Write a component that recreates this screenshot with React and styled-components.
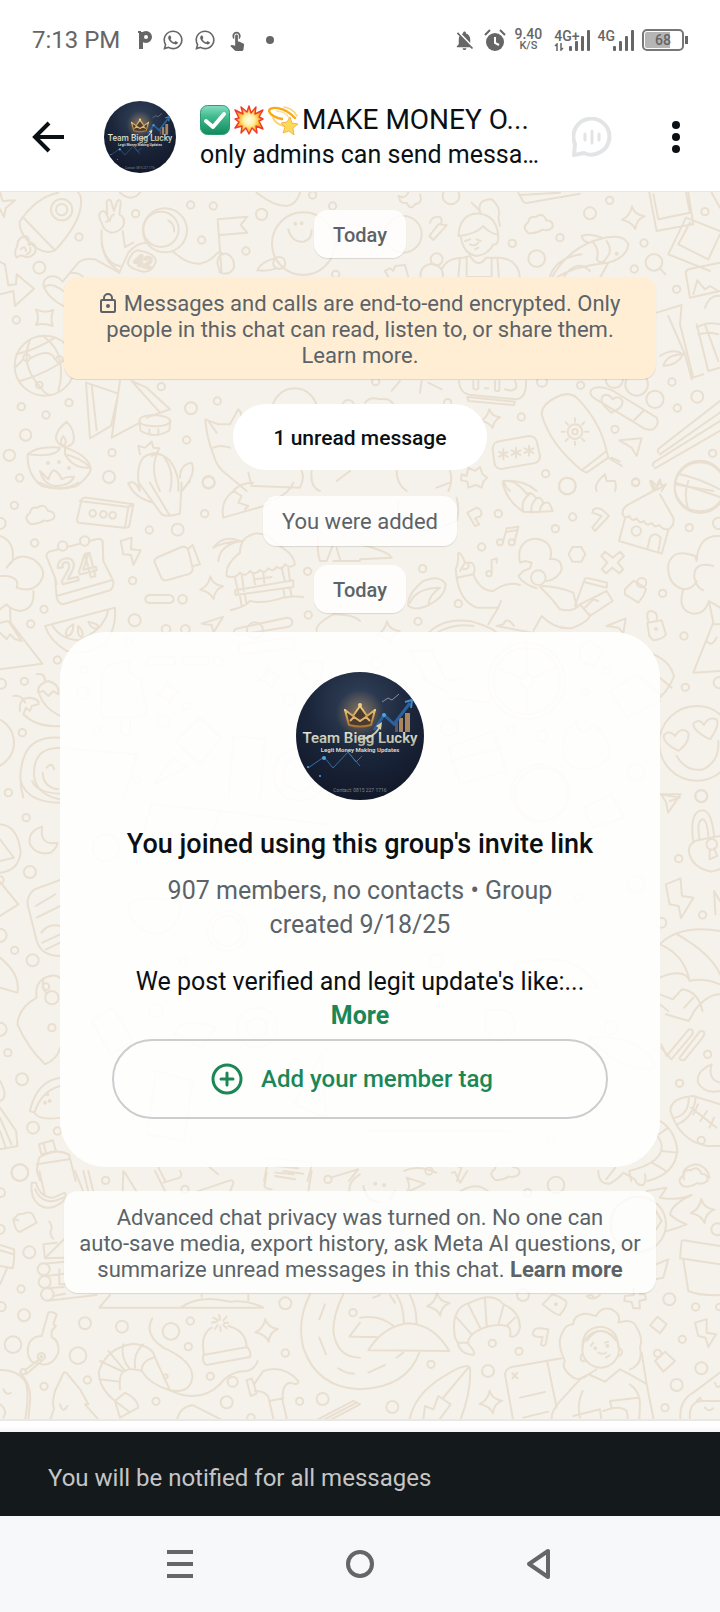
import React from 'react'
import styled, { createGlobalStyle } from 'styled-components'
import { FaWhatsapp } from 'react-icons/fa'
import { MdNotificationsOff, MdTouchApp } from 'react-icons/md'

const GlobalStyle = createGlobalStyle`
  * {
    box-sizing: border-box;
  }
  body {
    margin: 0;
    background: #fff;
    font-family: Roboto, 'Noto Sans', sans-serif;
    color: #0b1014;
  }
  button {
    padding: 0;
    border: 0;
    background: none;
    color: inherit;
    font: inherit;
    cursor: pointer;
  }
  a {
    color: inherit;
    text-decoration: none;
  }
`

// four pointed sparkle centred on x, y
const sparkle = (x, y, s = 34) =>
  `M${x - 4},${y - s} Q${x + 3},${y - 8} ${x + s},${y - 4} Q${x + 9},${y + 5} ${x + 6},${y + s} Q${x - 4},${y + 12} ${x - s},${y + 6} Q${x - 10},${y - 4} ${x - 4},${y - s} Z`

const cloud = (x, y) =>
  `M${x - 30},${y + 28} Q${x - 52},${y + 10} ${x - 30},${y - 4} Q${x - 28},${y - 24} ${x - 8},${y - 20} Q${x + 14},${y - 36} ${x + 24},${y - 10} Q${x + 48},${y - 8} ${x + 42},${y + 12} Q${x + 28},${y + 24} ${x + 12},${y + 18} Q${x - 8},${y + 32} ${x - 30},${y + 28} Z`

// wallpaper tiles, drawn on a grid three times finer than the page
const doodles = [
  {
    at: 'translate(0 -1) scale(0.3333)',
    circles: [[572, 42, 11], [640, 45, 11], [407, 68, 11], [237, 138, 11], [605, 147, 11], [738, 180, 11], [785, 70, 17], [938, 12, 11], [998, 45, 11], [1007, 250, 11], [118, 230, 18], [49, 387, 11], [64, 647, 11], [207, 635, 11], [138, 672, 11], [77, 732, 17], [28, 793, 17], [59, 861, 11], [573, 652, 18], [484, 587, 11], [652, 630, 11], [560, 747, 11], [336, 785, 11], [327, 858, 18], [626, 873, 18], [1045, 645, 18], [185, 56, 32], [185, 56, 17], [495, 118, 66], [483, 115, 53], [910, 158, 94], [838, 216, 18], [886, 98, 3], [905, 97, 3], [134, 524, 90], [80, 500, 10], [178, 505, 10], [118, 582, 10], [884, 660, 68], [144, 816, 3], [177, 813, 3], [207, 831, 3]],
    paths: [
      'M0,55 L12,78 L17,52 L45,28 L8,30 L0,5',
      'M175,5 C120,15 80,60 60,90 Q55,110 75,140 C110,180 140,190 165,178 C210,130 240,80 243,40 Q245,15 235,5 M68,78 L165,178',
      'M78,135 Q50,140 52,165 Q40,185 50,200 Q60,190 70,195 Q90,205 105,185 Q112,165 95,155 Q90,165 85,160 Q92,145 78,135 M62,175 Q75,160 78,180 M80,190 Q95,185 90,170',
      'M305,95 Q290,70 305,62 Q315,55 322,75 L320,35 Q322,22 332,28 L342,60 L352,30 Q362,22 362,38 L358,70 Q378,80 370,105 Q355,125 335,125 Q310,120 305,95 M322,75 Q330,92 318,92 M342,70 Q330,75 330,90',
      'M305,118 Q300,200 345,230 L358,245 L385,185 Q410,155 440,155 M368,120 L375,168 L400,155',
      'M305,160 Q320,220 360,225 M505,88 Q525,100 522,122',
      'M415,178 Q468,188 468,212 Q455,245 430,242 Q385,232 383,215 Q395,180 415,178 Z',
      'M358,245 L285,205 Q250,200 235,215 L188,272 Q170,250 145,258 Q125,270 132,290 Q150,325 190,345 M132,290 Q150,270 190,300 M210,245 Q245,245 250,260',
      'M520,182 Q560,220 600,218 Q630,212 650,188 Q660,180 670,190',
      'M665,245 L653,85 L742,77 L722,102 L742,125 L660,132 M652,215 Q655,185 680,188 Q705,200 702,230 Q690,255 660,245 Z',
      'M828,200 Q780,215 772,238 Q800,242 830,232 M865,115 Q875,155 910,152 Q935,148 935,118',
      'M0,310 L40,300 L45,345 L102,293 L50,250 L48,280 L25,283 L15,220 L0,213',
      'M108,355 Q133,368 160,357 Q150,382 158,405 Q132,395 108,402 Q120,380 108,355 Z',
      'M50,490 Q110,475 165,440 M60,570 Q140,550 220,490 M90,447 Q60,520 118,585 Q135,610 150,612 M130,435 Q175,470 178,505 Q190,550 175,600 M45,530 L70,505 M95,500 Q150,470 165,505',
      'M258,575 L355,608 L333,705 L270,742 Z M275,580 L290,718 M360,570 L335,740 L420,695 M395,570 L440,590 L510,655 L440,680 M395,570 L480,665',
      'M418,690 Q420,672 464,672 Q508,675 511,690 Q508,705 464,706 Q420,705 418,690 L422,720 Q464,745 508,718 L511,690 M448,715 L448,725 M475,715 L475,725',
      'M83,790 Q80,850 125,885 Q180,900 230,885 Q275,850 272,830 Q240,800 195,790 L195,768 M83,790 Q110,765 180,770 Q170,800 83,790 M195,770 Q260,790 272,830 Q220,835 195,790',
      'M200,692 Q165,720 168,745 Q190,785 220,755 Q228,720 200,692 Z M190,735 Q175,755 190,765 Q205,755 190,735',
      'M120,840 Q130,880 165,885 Q210,885 222,858 Q200,855 185,865 Q175,840 160,838 Q148,850 145,865 Z',
      'M420,900 Q405,830 430,800 Q470,770 510,810 Q540,850 535,900 M470,790 Q450,840 480,900 M490,795 Q525,840 510,900 M540,860 Q540,820 575,815 Q590,850 545,900 M420,790 L415,765 L435,770 L455,752 L460,770 L478,772 Q470,790 455,795 M385,880 Q400,860 420,900',
      'M640,790 Q620,740 616,685 L655,700 L690,700 L715,655 Q730,670 722,690 M640,790 Q650,830 680,850 L740,900 M625,690 L650,725 M640,770 Q660,760 690,770 M745,845 L755,885 L900,890 Q915,860 905,840',
      'M770,5 Q820,45 860,45 Q890,40 900,5 M360,5 Q395,35 420,5 M935,840 Q930,890 960,900 M1010,870 L1050,840'
    ]
  },
  {
    at: 'translate(360 -1) scale(0.3333)',
    circles: [[273, 15, 25], [690, 67, 18], [749, 28, 11], [600, 140, 11], [457, 157, 11], [530, 203, 25], [823, 234, 11], [852, 156, 11], [1035, 62, 11], [950, 295, 11], [936, 573, 11], [1012, 617, 18], [952, 651, 11], [765, 715, 11], [662, 583, 11], [484, 678, 11], [557, 848, 11], [622, 885, 25], [827, 873, 11], [1058, 787, 11], [546, 572, 15], [263, 635, 11], [47, 572, 11], [882, 214, 25], [215, 253, 34], [230, 205, 18], [830, 580, 34], [885, 625, 26], [763, 565, 26], [645, 722, 22], [645, 722, 8], [1020, 890, 76], [770, 188, 3], [130, 130, 55]],
    paths: [
      'M115,15 Q135,25 145,5 M180,10 Q190,35 165,40 Q150,60 140,35 Q118,40 118,18',
      'M475,5 L490,32 Q495,38 505,35 L660,8 M480,12 L600,5',
      'M295,135 Q300,65 360,68 Q410,75 415,135 Q415,165 400,160 Q385,190 350,195 Q310,190 302,135 Z M295,135 Q350,130 370,105 Q385,125 415,132 M360,65 Q350,25 395,25 Q425,50 415,80 L420,105 M335,35 L362,62 M315,150 L330,145 M350,145 L362,150 M330,160 Q345,168 355,155 M345,175 L355,170',
      'M245,235 Q260,200 310,200 L330,195 Q355,235 378,200 L420,200 Q475,205 480,260 M300,200 L295,260 M320,202 L320,258 L395,258 L395,200 M412,200 L417,260',
      'M210,95 Q215,75 240,78 Q250,90 240,100 L260,103 L220,147 L208,135 L235,100',
      cloud(535, 98),
      sparkle(820, 80),
      sparkle(392, 683, 28),
      'M575,260 Q620,180 700,150 Q790,120 805,160 Q800,200 745,215 Q640,225 590,260 M570,255 Q590,200 665,190 M665,135 Q690,125 725,140 M665,135 Q670,155 690,155 M700,155 Q720,180 710,205 Q725,225 740,200 Q760,180 740,150 M610,260 Q650,200 690,240 M745,215 L720,260',
      'M868,5 L890,120 L1000,100 L985,5 M880,10 L895,85 L990,65 L978,5 M978,80 L1080,120 M978,80 L925,190 L1050,240 M990,95 L955,160 L1045,205 L1080,130 M900,232 L916,250 M1055,5 L1080,50',
      'M1080,215 L985,235 Q975,240 978,250 L990,320 L1080,300 M1000,310 L1012,268 L1035,295 L1050,285 L1075,300 M1035,350 Q1050,310 1080,315',
      'M75,240 L90,232 L100,240 L105,225 L135,222 L145,258 M75,240 L85,258',
      'M890,365 L965,342 L960,400 L985,500 L1000,560 L1030,550 M925,375 L975,490 L995,565 M970,490 Q920,490 910,525 Q950,525 970,490 Q940,470 900,495 M1010,410 Q1040,390 1080,400 M1010,400 L1045,540 L1080,530 M1035,400 L1075,510 M1015,430 Q1050,420 1075,430',
      'M297,570 Q300,610 335,612 L470,625 Q500,620 498,570 M322,618 L465,632 L462,642 L325,630 Z',
      'M340,570 L340,592 Q348,600 355,592 L355,570 M375,592 L385,592 M405,570 L405,598 Q412,602 418,598 L418,570 M435,595 Q465,605 470,585 L465,570',
      'M95,600 L120,570 M180,605 L185,570 M205,575 L245,595 M15,635 Q30,615 60,625 Q90,620 100,640',
      'M700,620 Q680,600 705,590 Q730,585 760,600 L890,680 Q900,700 880,715 Q860,720 840,705 L700,620 M755,665 Q715,635 728,615 Q745,605 758,625 Q775,610 788,630 Q790,650 755,665 M820,690 L850,660',
      'M545,670 Q545,640 590,618 Q625,600 650,620 Q720,690 740,780 L665,838 Q570,760 545,670 M740,780 L745,800 L680,845 L665,838 M745,800 L785,825 M755,800 L780,812 M645,682 L645,692 M645,752 L645,762 M605,722 L615,722 M675,722 L685,722 M617,694 L624,701 M673,694 L666,701 M617,750 L624,743 M673,750 L666,743',
      'M412,752 L505,735 Q525,735 530,750 L540,795 Q540,812 525,816 L425,834 Q408,834 404,820 L398,775 Q398,758 412,752 Z M430,775 L430,805 M417,783 L443,797 M443,783 L417,797 M468,770 L468,800 M455,778 L481,792 M481,778 L455,792 M507,764 L507,794 M494,772 L520,786 M520,772 L494,786',
      'M778,748 L845,742 L830,795 L815,770 Z',
      'M895,785 Q890,775 900,770 L1080,630 M900,790 L1080,665 M880,825 Q875,820 885,812 L1080,690 M885,832 L1080,720',
      'M960,850 Q1010,860 1080,895 M945,880 Q1000,890 1060,900',
      'M305,850 L320,855 L325,830 L345,840 L360,828 L368,850 L382,860 L370,872 L365,890 L348,882 L325,890 L322,872 L303,868 Z',
      'M110,840 Q110,880 140,900 M270,840 Q280,870 265,900 M430,870 Q440,895 450,900 M430,870 Q490,865 530,900 M735,850 Q700,880 710,900 M735,850 L740,870 L765,870 Q770,885 765,900 M880,895 L875,870 L890,885 L900,865 L905,885 L918,880 L905,900'
    ]
  },
  {
    at: 'translate(0 289) scale(0.3333)',
    circles: [[43, 73, 11], [104, 186, 11], [448, 147, 11], [533, 146, 18], [614, 98, 11], [626, 5, 18], [398, 299, 11], [132, 385, 11], [92, 429, 11], [404, 418, 18], [498, 445, 13], [556, 445, 13], [172, 537, 11], [73, 601, 11], [67, 755, 11], [25, 935, 11], [923, 271, 11], [925, 402, 11], [3, 608, 15], [0, 127, 17], [248, 635, 18], [490, 720, 18], [868, 655, 18], [560, 675, 11], [278, 97, 10], [310, 100, 10], [338, 103, 10], [548, 355, 13], [765, 448, 24], [-35, 785, 77], [188, 195, 14], [254, 180, 14], [385, 480, 11], [250, 567, 11], [410, 895, 11], [290, 745, 11], [655, 540, 14], [900, 880, 80], [900, 880, 50]],
    paths: [
      cloud(120, 100),
      'M245,55 Q250,48 262,50 L400,70 L388,135 Q385,142 372,140 L235,125 Q230,120 232,112 Z M240,60 L385,78 L375,140 M385,78 L400,70',
      'M385,5 Q400,50 460,65 M420,10 L485,100 Q500,110 540,98 L545,5 M450,5 L510,105 M120,5 Q180,40 235,5 M545,30 L570,0',
      'M175,205 L145,213 Q138,218 140,228 L165,290 L170,350 Q175,368 190,370 L330,328 Q342,320 340,300 L310,240 L308,182 Q305,172 295,173 L268,180 M202,198 L240,188 M170,345 L335,298 M165,290 L170,310',
      'M362,180 L395,170 L393,205 L422,208 L400,252 L393,222 L370,220 Z',
      'M475,228 L545,198 Q560,195 565,208 L578,262 Q578,275 565,280 L500,298 Q488,300 484,290 L463,242 Q464,232 475,228 Z M563,205 L578,192 L600,250 L580,255',
      sparkle(635, 320),
      'M448,342 L508,342 Q521,345 521,354 Q521,365 508,366 L448,366 Q436,365 436,354 Q436,344 448,342 Z',
      'M135,435 L345,380 Q350,450 310,490 Q260,525 200,510 Q150,480 135,435 M155,430 Q180,475 235,478 Q310,450 325,388 M220,430 Q190,445 200,465 Q220,465 220,430 M235,435 Q230,465 245,468 Q255,455 235,435 M265,422 Q270,440 290,444 Q305,430 265,422',
      'M0,165 Q45,180 38,240 L20,260 Q50,210 100,235 Q150,270 115,310 Q90,335 50,320 Q60,290 20,285 L0,285 M100,330 Q105,385 60,390 Q30,385 20,370 L0,385',
      'M30,380 L32,425 L127,548 L0,565 M0,425 L25,420 L65,480 L45,475 L30,460 L20,475 L0,455',
      'M110,580 Q135,575 135,600 M115,635 Q110,610 145,600 Q180,610 175,640 L160,630 L145,645 L130,630 Z M118,640 Q130,680 180,705 M40,645 Q65,640 75,665 M60,690 Q55,650 90,650 Q120,655 115,670 L95,675 L90,690 L78,680 L70,700 Q110,740 180,735',
      'M180,770 Q100,765 75,820 Q50,880 70,950 M180,800 Q100,800 102,880 Q105,940 180,955 M128,875 Q130,920 175,925 M140,860 Q155,840 162,865',
      'M680,285 Q675,250 720,215 Q720,165 770,157 Q815,160 830,190 Q880,215 885,250 Q870,265 855,250 Q845,270 830,257 Q820,275 805,262 Q795,280 780,267 Q765,285 750,270 Q735,290 720,275 Q705,295 680,285 Z',
      'M705,290 L715,335 M725,280 L732,330 M845,260 L855,302 M865,262 L870,300 M705,328 L880,298 L880,318 L707,342 Z M720,345 L725,375 M735,342 L740,370 M850,325 L855,350 M870,320 L875,345 M760,280 L765,310 M790,275 L793,305 M765,295 L815,288 M692,387 Q730,380 750,360 Q790,370 850,350 Q880,345 910,348 M640,200 Q670,160 720,180 Q665,185 640,200 M655,240 Q660,190 725,180',
      'M605,428 L670,407 L640,455 L635,432 Z',
      'M715,442 L860,410 Q878,410 877,425 Q876,435 862,438 L715,462 Q700,460 702,450 Q705,443 715,442 Z M950,450 Q945,430 1000,400 Q1060,400 1080,420',
      'M670,110 Q660,60 700,30 Q720,5 760,5 M670,110 L810,70 M700,30 L725,45 L715,65 L745,75 L735,85 M880,5 Q860,50 800,60',
      'M955,170 Q950,210 960,240 L980,240 L1000,190 M1000,240 L1080,240 M1010,200 L1020,235',
      'M305,600 Q305,545 360,545 L390,540 Q375,580 420,590 L440,690 Q430,710 410,710 L315,710 Q300,705 302,690 Z M362,715 L362,755 Q376,770 390,755 L390,715',
      'M448,528 L520,528 Q535,540 520,553 L448,553 Q438,540 448,528 Z M555,528 L620,528 Q635,540 620,553 L555,553 Q540,540 555,528 Z',
      sparkle(505, 635),
      sparkle(810, 590),
      'M720,490 L870,470 Q890,480 880,500 L725,520 Q710,505 720,490 Z M895,560 Q900,530 970,545 L960,600 Q920,610 895,560 M700,765 L795,775 L780,960 M700,765 L685,960 M525,780 L600,710 L665,770 L600,850 Z M460,910 L520,830 L560,860 Z M180,800 L410,820 L370,960'
    ]
  },
  {
    at: 'translate(360 289) scale(0.3333)',
    circles: [[415, 98, 11], [638, 108, 11], [586, 143, 11], [365, 198, 11], [188, 263, 11], [295, 368, 11], [174, 421, 11], [908, 337, 11], [972, 465, 11], [976, 619, 11], [1024, 946, 18], [1078, 605, 17], [988, 140, 11], [1076, 127, 17], [827, 5, 11], [622, 15, 25], [420, 184, 9], [455, 184, 9], [387, 278, 8], [535, 290, 22], [829, 150, 14], [1020, 15, 76], [1010, 787, 112], [845, 305, 14], [888, 444, 3], [500, 600, 115], [500, 600, 100], [500, 600, 20], [267, 740, 25], [545, 765, 18], [827, 875, 25], [675, 632, 11], [455, 745, 11], [540, 935, 85], [50, 545, 18], [740, 570, 11]],
    paths: [
      'M428,5 Q440,60 490,92 Q520,95 578,90 L570,70 Q565,60 550,68 Q545,45 528,52 Q515,30 500,38 Q470,0 445,0 M490,92 Q480,60 510,38 M515,95 Q510,70 530,52 M540,92 Q540,75 550,68',
      'M429,184 L440,142 L475,137 L464,182 M440,152 L473,147 M395,275 L395,237 L410,232 L410,245',
      'M637,198 L664,198 L676,220 L664,242 L637,242 L626,220 Z',
      'M735,212 L758,230 L780,212 L792,225 L773,245 L790,265 L778,277 L757,260 L738,277 L725,265 L742,245 L724,225 Z',
      'M788,100 Q785,80 810,68 L880,30 L870,0 M880,30 L915,15 M900,40 L940,110 Q945,135 925,145 Q910,148 898,132 Q885,142 875,126 Q860,138 852,120 Q838,130 830,112 Q815,125 808,105 Q795,115 788,100 M795,112 L777,180 L905,218 L925,148 M862,205 L870,170 Q885,150 902,170 L895,214 M875,5 L885,25 L900,5',
      'M945,5 Q1000,20 1080,48 M985,0 Q970,40 985,85',
      'M290,290 L340,280 Q350,260 335,245 L315,245 Q305,215 295,215 Q295,250 287,265 Z M315,245 L300,270 M325,250 Q330,265 310,265',
      'M290,290 Q300,360 350,380 L415,380 L423,360 M415,380 L385,430 M340,280 Q360,330 400,330 Q440,300 480,312 M480,245 Q470,200 500,180 Q530,165 560,185 Q580,205 570,235 Q605,230 605,265 Q595,295 560,300 M480,245 L495,240 L515,245 L510,262 L490,270 L475,285 Q490,310 530,322',
      'M540,318 Q570,345 600,385 Q640,395 660,370 M545,315 Q590,315 640,335 L650,375 M520,450 L545,405 Q590,450 640,440 Q690,420 690,400',
      'M660,370 L740,330 L758,360 L690,405 Z M675,380 L700,355 L715,360 M645,375 L672,300 Q675,288 685,292 L742,305 L740,320 L672,303',
      'M795,325 L820,300 Q830,300 858,325 L850,345 L835,365 L795,340 Z M862,425 L905,418 L918,460 Q910,475 880,478 L868,465 Z M865,420 Q855,390 875,390 Q895,395 890,415',
      'M1080,165 Q1015,160 1010,240 L1005,225 Q940,200 925,250 Q920,310 970,325 Q1000,325 1010,300 M1060,255 Q1000,240 1003,290 Q1010,320 1030,328 M970,325 Q950,390 1000,398 Q1035,400 1047,360 L1060,425 L1000,575 L1080,570 M1047,360 L1080,380 M1060,430 L1080,430 M1040,480 Q1055,500 1070,470',
      'M145,375 Q140,340 190,300 Q240,280 257,310 Q255,350 200,375 Q165,390 145,375 M150,365 Q170,320 240,320 Q210,340 205,370',
      sparkle(85, 455),
      'M322,95 L350,80 Q370,85 362,105 L345,112 L358,130 L345,135 Z M697,95 Q700,75 725,85 L747,105 L705,150 L697,140 L725,105 Z',
      'M205,456 Q250,410 330,420 Q400,440 410,456 M230,456 Q280,425 340,435 M410,435 L520,456 M410,435 L430,430 Q440,405 462,435',
      'M740,435 L797,412 L790,456 L775,440 Z',
      'M955,810 Q905,785 912,762 Q930,745 945,765 Q965,735 985,755 Q990,785 955,810 Z M1050,775 Q1000,750 1000,728 Q1018,710 1032,732 Q1045,705 1070,715 Q1080,735 1050,775 Z M950,825 Q980,875 1030,865 Q1080,840 1075,780',
      'M880,520 Q930,540 942,585 Q930,620 900,650 M900,590 L935,620 M900,940 L960,950 L930,960',
      'M290,50 Q300,90 290,120 Q200,160 160,145 Q110,140 115,60 M0,235 L95,230 L85,220 Q60,205 0,190 M270,5 L230,20',
      'M500,485 L500,580 M500,620 L500,700 M410,560 L480,590 M590,560 L520,590 M265,800 L400,750 L440,870 L300,910 Z M270,840 L425,800 M150,510 L215,510 L260,600 L310,590 M150,510 L200,600 L270,640 M270,650 L390,665 M750,630 L830,580 L900,640 M750,630 L800,710 L900,660 M610,830 Q600,760 650,720 Q660,780 700,730 Q760,780 745,830 Q700,880 640,860 Z M660,500 L690,480 L730,510 L700,555 L660,540 Z'
    ]
  },
  {
    at: 'translate(0 589) scale(0.4592 0.3333)',
    squash: 0.726,
    circles: [[57, 110, 11], [65, 273, 18], [0, 297, 11], [0, 463, 20], [32, 508, 11], [71, 538, 18], [113, 740, 11], [0, 745, 20], [17, 815, 11], [48, 895, 18], [72, 1040, 18], [125, 1050, 11], [43, 1175, 25], [1527, 45, 18], [1478, 233, 11], [1440, 425, 15], [1530, 402, 11], [1541, 820, 11], [1480, 907, 11], [1527, 1078, 11], [113, 650, 20], [100, 617, 10], [1550, 190, 16], [103, 940, 3], [108, 960, 3], [98, 965, 3], [495, 450, 60], [495, 450, 45], [560, 740, 60], [560, 740, 30], [230, 200, 40], [340, 690, 20], [1180, 40, 80], [1330, 740, 20], [950, 540, 20], [740, 430, 15], [400, 540, 11], [1200, 1080, 11], [1260, 350, 11], [1385, 310, 25]],
    paths: [
      'M45,0 Q60,65 131,65 M70,0 Q80,35 131,38',
      'M0,130 Q40,135 45,215 Q40,270 0,275 M0,175 L30,230 L0,240',
      'M92,137 Q60,150 65,190 Q80,225 110,215 Q125,200 125,185 Q85,195 92,137',
      'M0,303 L40,370 L0,405',
      'M131,297 L75,325 Q58,345 60,370 L80,480 Q90,525 131,525 M78,375 L120,340 M80,410 L131,375 M90,455 Q105,425 131,435 M92,485 L131,460 M100,505 L131,485',
      'M0,530 Q45,580 38,635 L0,620',
      'M131,592 Q120,575 95,592 Q75,610 80,650 Q40,680 38,730 Q60,800 98,850 Q125,835 131,800 M95,592 Q90,620 100,635',
      'M65,990 Q80,900 131,890 M75,995 Q85,1020 131,1010 M65,990 L75,995 Q90,930 131,915',
      'M0,900 Q20,950 0,960 M0,980 L35,1050 L38,1095 L0,1105 M0,1010 L25,1090 M0,1050 L12,1098',
      'M85,1090 L115,1078 L122,1110 L90,1120 Z M95,1088 L100,1115 M80,1170 L85,1130 Q120,1100 150,1120 L165,1200 M80,1150 L150,1135 M80,1170 L88,1200',
      'M1440,40 L1482,40 L1455,95 L1450,62 Z',
      'M1500,210 Q1500,180 1530,175 L1568,165 M1500,210 Q1505,260 1550,272 L1568,265 M1510,185 Q1500,90 1530,88 Q1550,90 1555,165 M1524,178 Q1515,115 1532,115 Q1540,120 1543,170 M1546,205 L1545,235 L1562,225 L1555,202',
      'M1450,310 L1482,292 L1485,345 L1510,350 L1483,412 L1478,375 L1458,370 Z M1555,330 L1568,360 M1555,330 L1558,400',
      'M1437,490 Q1480,430 1568,450 M1437,490 Q1490,520 1502,600 M1437,590 Q1490,560 1502,600 Q1530,590 1568,610 M1475,460 Q1550,520 1568,580',
      'M1437,640 L1465,655 L1485,625 Q1520,630 1530,690 M1490,680 L1510,650 M1450,700 L1500,720 L1512,690 Q1540,640 1568,640 M1437,670 L1455,690',
      'M1440,790 L1452,825 L1500,745 Q1515,745 1505,765 L1462,835 L1440,800 M1480,830 L1525,750 Q1540,750 1530,770 L1490,838 Q1478,838 1480,830',
      'M1550,850 Q1515,870 1520,905 Q1535,940 1568,930 M1550,850 Q1540,895 1568,905',
      'M1460,990 Q1460,950 1510,945 L1568,970 M1460,990 Q1480,1080 1540,1095 L1568,1095 M1470,1010 Q1500,1000 1500,950 M1475,1030 Q1510,1010 1515,950 M1505,980 L1560,1040 M1510,1000 L1520,970 M1525,1020 L1540,990 M1545,1040 L1555,1010',
      'M1430,1015 Q1470,1040 1475,1110 Q1470,1180 1410,1200 M1425,1055 Q1445,1080 1440,1110 Q1430,1150 1370,1170 M1435,1060 L1455,1040 M1440,1110 L1475,1115 M1420,1145 L1450,1170 M1340,1160 L1320,1195 M1370,1170 L1375,1200',
      'M1490,1195 Q1480,1160 1515,1150 Q1540,1155 1545,1190',
      'M330,70 L480,90 L440,240 L300,210 Z M480,90 L710,130 M200,720 L245,680 L290,780 L240,820 Z M380,760 Q390,700 470,740 L440,800 Z M700,820 L710,1010 L640,970 Z M800,1050 L1110,1050 M1280,770 Q1400,760 1430,860 Q1360,880 1280,770 M280,370 Q300,340 390,360 Q400,440 340,460 Q280,440 280,370 M1060,690 Q1130,670 1120,750 Q1080,820 1055,740 Z M1120,550 Q1260,500 1300,620 L1130,600 Z M340,870 L420,900 L400,1080 L320,1060 Z M1270,80 L1330,40 L1360,110 L1290,140 Z',
      'M575,1200 L585,1130 L680,1145 L670,1200 M600,1155 L650,1162 M600,1175 L640,1180 M345,1160 L360,1200 M440,1140 L475,1180 M720,1190 L780,1165 L760,1200 M880,1170 Q910,1150 950,1175 M985,1150 L1005,1160 L995,1200'
    ]
  },
  {
    at: 'translate(0 979) scale(0.3333)',
    circles: [[60, 5, 25], [317, 28, 11], [555, 55, 11], [88, 244, 18], [63, 354, 11], [984, 25, 11], [0, 175, 14], [3, 407, 14], [72, 433, 18], [39, 521, 25], [255, 457, 18], [366, 467, 18], [513, 481, 25], [571, 450, 11], [234, 554, 25], [565, 527, 11], [856, 397, 18], [856, 546, 11], [631, 616, 11], [262, 627, 11], [132, 646, 11], [468, 691, 11], [680, 694, 18], [899, 691, 11], [968, 684, 18], [753, 740, 11], [1059, 425, 11], [2, 65, 13], [131, 295, 18], [134, 333, 18], [142, 370, 19], [124, 557, 11], [124, 557, 3], [70, 602, 8], [698, 632, 15], [497, 616, 6]],
    paths: [
      'M95,35 L108,35 Q120,80 160,80 L195,65 Q200,75 190,90 Q150,125 115,100 Q90,80 95,35 M105,55 Q130,110 190,80',
      'M118,0 L135,75 M225,0 L250,62 M250,0 L265,62 M265,0 L280,62',
      'M370,0 L368,60 M375,5 L410,62 M465,0 L495,60 M490,35 L540,20 Q548,10 540,0 M590,62 L690,28 Q702,28 700,38 L690,62',
      'M800,5 L793,45 Q800,55 815,55 M825,15 L885,25 M850,0 L910,8 M935,0 L925,62 M1080,10 Q1045,30 1048,62',
      'M40,145 L55,130 L70,128 Q90,120 98,130 L110,155 L60,183 Q45,180 40,145 M40,145 L55,148',
      'M148,152 Q160,170 152,180 Q150,195 160,203',
      'M130,220 L170,215 M130,220 L135,262 L192,205 M135,262 L192,260 M135,278 L192,272 M140,315 L192,308 M140,352 L192,348 M142,389 L290,372 M160,375 L195,368 M178,295 L178,340 L195,340',
      'M0,222 L42,235 Q45,260 38,292 L0,285 M22,290 L0,340 M0,238 L40,250',
      'M330,372 L298,410 L790,410 Q740,385 690,392 Q600,370 545,408 M605,372 L605,378 M745,372 L745,388',
      'M145,425 Q155,420 170,430 L160,460 L168,465 L155,480 L155,498 Q180,510 175,545 Q160,585 125,580 L95,572 Q75,550 88,515 Q100,495 125,495 Z M118,565 L75,598 M125,570 L80,608',
      'M0,597 Q50,595 75,630 Q90,660 75,750 M60,605 Q95,640 90,690 L85,750 M10,655 Q20,675 32,665 M0,700 Q25,720 10,740',
      'M150,750 L162,712 Q155,700 165,660 L190,607 Q196,600 203,610 L240,655 L265,700 L255,700 L295,745 M180,700 Q188,730 202,705',
      'M345,690 Q295,650 297,600 Q320,530 400,518 Q460,525 465,560 L510,658 Q450,640 425,600 M345,690 L360,740 L415,710 Q415,685 375,665 Z M345,690 L385,720 M360,655 Q355,600 380,598 Q385,590 425,600 M300,570 L365,600 M298,625 L360,632 M325,540 L375,600 M370,520 Q360,560 390,595 M430,520 Q400,545 405,590 M460,560 Q425,570 425,600',
      'M457,442 Q430,490 490,530 Q580,570 577,620 Q570,670 510,658 Q600,700 660,640 Q690,600 740,600 Q765,595 773,570',
      'M612,550 Q600,490 635,470 M685,465 Q740,480 740,530 M610,552 L742,528 Q755,545 750,558 L620,582 Q605,575 610,552 M635,455 L650,452 M640,440 L655,448 M658,432 L660,446 M680,437 L670,448 M685,455 L672,456 M680,472 L670,462 M662,480 L661,466 M645,474 L653,462',
      sparkle(800, 478),
      'M740,628 L755,622 L762,640 L790,600 Q850,580 895,630 Q895,645 870,635 Q845,640 848,690 L862,750 M808,690 L822,750 M808,690 L850,682 M808,690 Q805,660 765,660 M740,628 L752,675 L770,668 L762,640',
      'M530,750 Q540,705 580,703 L668,748',
      'M930,370 Q890,450 910,530 Q950,650 1080,655 M1030,370 Q1000,430 1000,480 Q1010,560 1080,560 M975,400 L958,445 M958,500 L978,550 M1015,592 Q1040,608 1062,608 M1080,455 L1048,497 L1080,497',
      'M945,750 L1060,690 L1080,700 M985,750 L1080,700 M965,750 L1070,695'
    ]
  },
  {
    at: 'translate(360 979) scale(0.3333)',
    circles: [[588, 42, 25], [503, 65, 11], [1072, 175, 18], [489, 372, 18], [928, 385, 18], [1007, 408, 11], [397, 517, 11], [477, 541, 11], [213, 580, 11], [384, 600, 18], [97, 708, 18], [967, 505, 11], [1024, 592, 18], [950, 642, 18], [915, 710, 11], [1078, 408, 10], [893, 547, 11], [722, 535, 55], [835, 160, 83], [588, 400, 3], [207, 0, 11], [46, 38, 3], [72, 42, 3], [706, 532, 3], [742, 524, 3]],
    paths: [
      'M275,5 L285,3 L300,35 L322,0 M10,45 Q20,95 60,92 M90,85 L105,60 M140,20 L195,38 L150,60 M140,20 Q155,50 140,62',
      cloud(1000, 18),
      cloud(435, -2),
      'M715,0 Q715,40 750,38 Q780,20 790,5 L825,25 Q830,45 850,42 Q860,30 855,10 M300,62 Q350,30 385,62',
      sparkle(1028, 120, 36),
      sparkle(235, 400),
      sparkle(393, 693),
      'M860,60 L920,50 L900,80 Q950,90 995,72 Q935,100 930,130 Q950,150 980,160 Q930,180 915,180 M888,120 L905,150 L888,175 M888,280 L925,265 L910,320 L888,325',
      'M965,210 Q970,205 985,210 L1080,225 M965,210 L960,262 L1080,280 M970,265 L985,360 Q1020,375 1080,372',
      'M25,538 L268,540 Q220,460 145,457 Q70,465 25,538 M0,498 L50,498 M0,440 Q60,430 100,465 M0,655 Q140,650 178,545 M132,457 Q130,400 110,372 M170,460 Q170,410 150,372 M25,605 L75,582 M110,560 L130,545 M40,380 L60,372 M90,372 L105,395',
      'M285,500 Q270,410 330,395 Q400,360 430,400 Q480,420 480,470 Q470,505 450,495 Q455,470 440,465 Q400,455 350,480 Q320,500 325,520 Q350,545 340,552 Q300,550 293,515 Z M290,440 L335,490 M325,400 L360,470 M375,385 L380,465 M432,400 L415,460 M465,440 L440,465 M295,515 L325,515',
      'M548,400 L575,372 Q585,368 618,390 Q625,400 600,432 Q590,435 548,400 Z',
      'M518,490 Q520,470 540,472 L565,475 L557,520 Q550,528 543,520 L548,497 Q525,500 518,490',
      'M820,355 L822,372 L795,375 L793,390 L815,393 L820,412 L840,412 L838,390 L858,385 L855,370 L838,370 M680,375 L695,372 L705,382 L720,372 M680,375 Q690,385 705,382',
      'M893,437 L920,460 L900,487 L870,463 Z M1005,455 L1040,445 L1040,485 L1068,490 L1045,528 L1037,500 L1015,495 Z M885,570 L915,542 L945,570 L910,602 Z',
      'M640,620 Q600,590 615,570 Q590,520 605,490 Q615,460 640,460 Q640,430 680,428 L708,435 Q725,405 755,415 Q785,430 775,455 Q820,440 830,470 Q850,500 840,530 Q850,580 810,595 M640,620 Q660,630 680,615 M668,530 Q665,470 725,467 Q775,475 775,530 M680,510 Q720,450 770,510 M692,525 L700,515 M735,515 L745,512 M715,545 Q730,552 738,545 M738,560 L750,552 M665,550 Q655,575 680,570 M778,530 Q795,545 778,555',
      'M575,750 Q570,720 610,680 L665,620 Q690,610 710,595 M690,612 L735,632 L780,595 Q830,620 860,640 M810,640 Q840,660 840,700 L838,745 M750,690 L835,680 M750,690 L755,712 M660,740 Q650,700 668,660 M640,735 L720,715 L725,750 M730,720 Q780,700 800,720 L805,750 M845,545 L860,640 L882,750',
      'M460,750 L435,610 Q438,592 455,588 L605,562 M562,573 L590,710 M480,680 L555,663 M490,740 L565,722 M457,607 L472,622 M457,622 L472,605',
      'M148,750 Q160,680 230,630 Q320,570 330,590 Q335,660 300,750 M325,590 L250,680 M190,745 L195,705 L220,715 L235,675 L272,700 L235,750',
      'M962,750 Q955,690 1000,665 L1080,605 M990,745 Q985,690 1030,690 L1080,690 M1010,690 L1020,680 L1025,690 M1035,710 Q1045,725 1060,712 M1065,635 Q1070,655 1080,645'
    ]
  }
]

const Wallpaper = () => (
  <WallpaperArt viewBox='0 0 720 1229' preserveAspectRatio='xMidYMin slice' aria-hidden='true'>
    {doodles.map(tile => (
      <g key={tile.at} transform={tile.at}>
        {tile.paths.map(d => <path key={d} d={d} />)}
        {tile.circles.map(([x, y, r]) => (
          <ellipse key={`${x}-${y}-${r}`} cx={x} cy={y} rx={r * (tile.squash || 1)} ry={r} />
        ))}
      </g>
    ))}
    <text x='142' y='75' fontSize='16' transform='rotate(12 142 75)'>42</text>
    <text x='80' y='388' fontSize='34' transform='rotate(-14 80 388)'>24</text>
  </WallpaperArt>
)

const GroupPhoto = ({ id }) => (
  <svg viewBox='0 0 128 128' width='100%' height='100%' role='img' aria-label='Team Bigg Lucky'>
    <defs>
      <radialGradient id={`${id}-sky`} cx='0.5' cy='0.25' r='0.8'>
        <stop offset='0' stopColor='#34445c' />
        <stop offset='0.5' stopColor='#1b263b' />
        <stop offset='1' stopColor='#101626' />
      </radialGradient>
      <linearGradient id={`${id}-gold`} x1='0' y1='0' x2='0' y2='1'>
        <stop offset='0' stopColor='#f3cf85' />
        <stop offset='1' stopColor='#a8742f' />
      </linearGradient>
      <linearGradient id={`${id}-text`} x1='0' y1='0' x2='0' y2='1'>
        <stop offset='0' stopColor='#f2f3e8' />
        <stop offset='1' stopColor='#a9ac94' />
      </linearGradient>
      <radialGradient id={`${id}-glow`}>
        <stop offset='0' stopColor='#c79a5b' stopOpacity='0.6' />
        <stop offset='1' stopColor='#c79a5b' stopOpacity='0' />
      </radialGradient>
    </defs>
    <rect width='128' height='128' fill={`url(#${id}-sky)`} />
    <circle cx='64' cy='42' r='24' fill={`url(#${id}-glow)`} />
    <path d='M103 46h4v14h-4zM109 41h5v19h-5z' fill='#a98661' />
    <path d='M99 50h3v10h-3z' fill='#5a5560' />
    <path d='M78 58l10-15 10 9 16-21' fill='none' stroke='#2a62a0' strokeWidth='3' />
    <path d='M109 30l7-2-1 8' fill='none' stroke='#3f8bd0' strokeWidth='2' />
    <path d='M86 30l6-4 4 2 7-6' fill='none' stroke='#8b8f94' strokeWidth='1' />
    <path d='M12 96l16-11 9 11 15-16 8 10 6-6M52 80l12 14' fill='none' stroke='#3c6d9c' strokeWidth='1' />
    <g fill='#4da3e8'>
      <circle cx='28' cy='86' r='2' />
      <circle cx='12' cy='95' r='1' />
      <circle cx='24' cy='104' r='1' />
      <circle cx='88' cy='43' r='2' />
    </g>
    <path
      d='M53 53L49 38l8 6 7-10 7 10 8-6-4 15q-11 3-22 0z'
      fill='#4a3a30'
      stroke={`url(#${id}-gold)`}
      strokeWidth='2'
      strokeLinejoin='round'
    />
    <path d='M54 49l4-4 6 4 6-4 4 4' fill='none' stroke='#e0b46a' strokeWidth='2' />
    <g fill='#f3cf85'>
      <circle cx='49' cy='38' r='1' />
      <circle cx='64' cy='33' r='2' />
      <circle cx='79' cy='38' r='1' />
    </g>
    <path d='M62 67q14 1 22-12' fill='none' stroke='#cfc9ae' strokeWidth='2' />
    <path d='M80 54l6-4-1 8z' fill='#d8cfa8' />
    <text x='64' y='71' textAnchor='middle' fontSize='15' fontWeight='600' fill={`url(#${id}-text)`}>Team Bigg Lucky</text>
    <text x='64' y='80' textAnchor='middle' fontSize='6' fontWeight='700' fill='#d5d6cf'>Legit Money Making Updates</text>
    <text x='64' y='120' textAnchor='middle' fontSize='5' fill='#7c8494'>Contact: 0815 227 1716</text>
  </svg>
)

const CheckEmoji = () => (
  <svg width='30' height='30' viewBox='0 0 30 30' aria-hidden='true'>
    <defs>
      <linearGradient id='check-fill' x1='0' y1='0' x2='0' y2='1'>
        <stop offset='0' stopColor='#86dfc0' />
        <stop offset='0.4' stopColor='#3fb98d' />
        <stop offset='1' stopColor='#128a5c' />
      </linearGradient>
    </defs>
    <rect x='0.5' y='0.5' width='29' height='29' rx='7' fill='url(#check-fill)' stroke='#2c9c74' />
    <path d='M6 16l7 6L24 9' fill='none' stroke='#fff' strokeWidth='4' strokeLinecap='round' strokeLinejoin='round' />
  </svg>
)

const BoomEmoji = () => (
  <svg width='30' height='30' viewBox='0 0 30 30' aria-hidden='true'>
    <defs>
      <radialGradient id='boom-fill'>
        <stop offset='0' stopColor='#fffdf0' />
        <stop offset='0.4' stopColor='#fff0a0' />
        <stop offset='0.75' stopColor='#fdb92e' />
        <stop offset='1' stopColor='#f58220' />
      </radialGradient>
    </defs>
    <path
      d='M15 1l2 7 5-6-1 7 8-4-4 7 4 2-4 2 4 8-7-3 1 7-5-5-3 6-3-6-5 5 1-7-7 2 4-6-4-3 4-1-4-8 8 4-2-7 6 5z'
      fill='url(#boom-fill)'
      stroke='#ee3a2b'
      strokeWidth='1.4'
      strokeLinejoin='round'
    />
  </svg>
)

const DizzyEmoji = () => (
  <svg width='30' height='30' viewBox='0 0 30 30' aria-hidden='true'>
    <path d='M14 14C8 13 2 10 1 6c0-5 15-5 26 7' fill='none' stroke='#fba919' strokeWidth='2.4' strokeLinecap='round' />
    <path d='M5 13c2 4 6 7 11 8' fill='none' stroke='#fdd36b' strokeWidth='1.8' strokeLinecap='round' />
    <path d='M16 2c6 1 11 5 13 9' fill='none' stroke='#fdd36b' strokeWidth='1.6' strokeLinecap='round' />
    <path d='M8 6c6 0 11 3 14 8' fill='none' stroke='#fbe29b' strokeWidth='1.4' />
    <path d='M22 12l2 6 6 1-5 4 1 7-5-4-6 2 2-6-4-4 6-1z' fill='#fdd95a' stroke='#f2a93a' strokeWidth='0.8' strokeLinejoin='round' />
  </svg>
)

const StatusIcons = () => (
  <StatusGroup gap={10}>
    <svg width='14' height='20' viewBox='0 0 14 20' fill='none' stroke='currentColor' role='img' aria-label='PalmPay'>
      <path d='M3 19V2' strokeWidth='4' />
      <path d='M0 2h3' strokeWidth='2' />
      <circle cx='8' cy='7' r='4' strokeWidth='4' />
    </svg>
    <FaWhatsapp size={22} title='WhatsApp' />
    <FaWhatsapp size={22} title='WhatsApp' />
    <MdTouchApp size={22} title='Touch' />
    <Dot />
  </StatusGroup>
)

const Signal = ({ label, data }) => (
  <SignalBox>
    <SignalLabel tuck={data}>{label}</SignalLabel>
    <svg width='22' height='21' viewBox='0 0 22 21' fill='currentColor' aria-hidden='true'>
      <rect x='1' y='16' width='3' height='5' rx='1' />
      <rect x='7' y='11' width='3' height='10' rx='1' />
      <rect x='13' y='6' width='3' height='15' rx='1' />
      <rect x='19' y='0' width='3' height='21' rx='1' />
    </svg>
    {data && (
      <DataArrows width='10' height='8' viewBox='0 0 10 8' fill='none' stroke='currentColor' strokeWidth='1.5'>
        <path d='M3 8V1L1 3M7 0v7l2-2' />
      </DataArrows>
    )}
  </SignalBox>
)

const App = () => (
  <Screen>
    <GlobalStyle />
    <StatusBar>
      <StatusGroup gap={18}>
        <Clock>7:13 PM</Clock>
        <StatusIcons />
      </StatusGroup>
      <StatusGroup gap={8}>
        <MdNotificationsOff size={23} title='Silent' />
        <svg width='22' height='22' viewBox='0 0 22 22' role='img' aria-label='Alarm'>
          <circle cx='11' cy='13' r='9' fill='currentColor' />
          <path d='M1 6l5-5M21 6l-5-5' stroke='currentColor' strokeWidth='2' />
          <path d='M11 8v6l4 2' fill='none' stroke='#fff' strokeWidth='2' />
        </svg>
        <Speed>
          9.40<small>K/S</small>
        </Speed>
        <Signal label='4G+' data />
        <Signal label='4G' />
        <Battery>
          <span>68</span>
        </Battery>
      </StatusGroup>
    </StatusBar>

    <Header>
      <BackButton aria-label='Back'>
        <svg width='32' height='32' viewBox='0 0 32 32' fill='none' stroke='#0b1014' strokeWidth='4'>
          <path d='M32 16H3M17 2L3 16l14 14' />
        </svg>
      </BackButton>
      <Avatar as='button' size={72} aria-label='Group photo'>
        <GroupPhoto id='small' />
      </Avatar>
      <Heading>
        <Title>
          <CheckEmoji />
          <BoomEmoji />
          <DizzyEmoji />
          <span>MAKE MONEY O...</span>
        </Title>
        <Subtitle>only admins can send messa…</Subtitle>
      </Heading>
      <VoiceButton aria-label='Voice chat'>
        <svg width='40' height='40' viewBox='0 0 40 40' fill='none' stroke='#e2e4e6' strokeWidth='4' strokeLinecap='round' strokeLinejoin='round'>
          <path d='M3 27a18 18 0 1 1 9 9l-10 2z' />
          <path d='M13 17v6M20 14v12M27 17v6' strokeWidth='3' />
        </svg>
      </VoiceButton>
      <MenuButton aria-label='More options'>
        <svg width='8' height='32' viewBox='0 0 8 32' fill='#0b1014'>
          <circle cx='4' cy='4' r='4' />
          <circle cx='4' cy='16' r='4' />
          <circle cx='4' cy='28' r='4' />
        </svg>
      </MenuButton>
    </Header>

    <Chat>
      <Wallpaper />
      <DatePill>Today</DatePill>
      <Notice tone='cream'>
        <svg width='16' height='20' viewBox='0 0 16 20' fill='none' stroke='currentColor' strokeWidth='2' aria-hidden='true'>
          <rect x='1' y='7' width='14' height='12' rx='1' />
          <path d='M4 7V5a4 4 0 0 1 8 0v2' />
          <circle cx='8' cy='13' r='1' />
        </svg>
        Messages and calls are end-to-end encrypted. Only people in this chat can read, listen to, or share them. <a href='#encryption'>Learn more.</a>
      </Notice>
      <UnreadPill>1 unread message</UnreadPill>
      <EventPill>You were added</EventPill>
      <DatePill>Today</DatePill>
      <GroupCard>
        <Avatar size={128}>
          <GroupPhoto id='large' />
        </Avatar>
        <CardTitle>You joined using this group's invite link</CardTitle>
        <Meta>907 members, no contacts • Group created 9/18/25</Meta>
        <Description>We post verified and legit update's like:...</Description>
        <MoreButton>More</MoreButton>
        <TagButton>
          <svg width='32' height='32' viewBox='0 0 32 32' fill='none' stroke='currentColor' strokeWidth='3' strokeLinecap='round'>
            <circle cx='16' cy='16' r='14' />
            <path d='M16 10v12M10 16h12' />
          </svg>
          Add your member tag
        </TagButton>
      </GroupCard>
      <Notice>
        Advanced chat privacy was turned on. No one can <Keep>auto-save</Keep> media, export history, ask Meta AI questions, or summarize unread messages in this chat. <StrongLink href='#privacy'>Learn more</StrongLink>
      </Notice>
    </Chat>

    <Footer />
    <Toast role='status'>You will be notified for all messages</Toast>
    <SystemNav>
      <button aria-label='Recent apps'>
        <svg width='28' height='30' viewBox='0 0 28 30' fill='#666'>
          <path d='M1 1h26v4H1zM1 13h26v4H1zM1 25h26v4H1z' />
        </svg>
      </button>
      <button aria-label='Home'>
        <svg width='30' height='30' viewBox='0 0 30 30' fill='none' stroke='#666' strokeWidth='4'>
          <circle cx='15' cy='15' r='12' />
        </svg>
      </button>
      <button aria-label='Back'>
        <svg width='28' height='32' viewBox='0 0 28 32' fill='none' stroke='#666' strokeWidth='4' strokeLinejoin='round'>
          <path d='M22 3v26L3 16z' />
        </svg>
      </button>
    </SystemNav>
  </Screen>
)

const Screen = styled.div`
  display: flex;
  flex-direction: column;
  min-height: 100vh;
`

const StatusBar = styled.div`
  display: flex;
  align-items: center;
  justify-content: space-between;
  height: 80px;
  padding: 0 32px;
  color: #666;
`

const StatusGroup = styled.div`
  display: flex;
  align-items: center;
  gap: ${props => props.gap}px;
`

const Clock = styled.time`
  font-size: 24px;
`

const Dot = styled.span`
  width: 8px;
  height: 8px;
  margin-left: 8px;
  border-radius: 50%;
  background: currentColor;
`

const Speed = styled.div`
  display: flex;
  flex-direction: column;
  align-items: center;
  margin-right: 4px;
  font-size: 14px;
  font-weight: 500;
  line-height: 12px;
  small {
    font-size: 11px;
  }
`

const SignalBox = styled.div`
  display: flex;
  position: relative;
`

const SignalLabel = styled.span.withConfig({ shouldForwardProp: prop => prop !== 'tuck' })`
  margin-right: ${props => (props.tuck ? -12 : -3)}px;
  font-size: 14px;
  font-weight: 500;
  line-height: 12px;
`

const DataArrows = styled.svg`
  position: absolute;
  left: 0;
  bottom: 0;
`

const Battery = styled.div`
  position: relative;
  width: 42px;
  height: 22px;
  margin-right: 4px;
  border: 2px solid #777;
  border-radius: 5px;
  background: linear-gradient(90deg, #b5b5b5 68%, #fff 68%);
  background-clip: content-box;
  padding: 1px;
  font-size: 14px;
  font-weight: 500;
  line-height: 16px;
  text-align: center;
  &::after {
    content: '';
    position: absolute;
    right: -6px;
    top: 5px;
    width: 3px;
    height: 8px;
    background: #666;
  }
`

const Header = styled.header`
  display: flex;
  align-items: center;
  height: 112px;
  padding: 2px 40px 0 32px;
  border-bottom: 1px solid #e6e6e6;
`

const BackButton = styled.button`
  display: flex;
  margin-right: 40px;
`

const Avatar = styled.div`
  flex: none;
  display: flex;
  width: ${props => props.size}px;
  height: ${props => props.size}px;
  border-radius: 50%;
  overflow: hidden;
`

const Heading = styled.div`
  flex: 1;
  min-width: 0;
  margin-left: 24px;
`

const Title = styled.h1`
  display: flex;
  align-items: center;
  gap: 4px;
  margin: 0;
  font-size: 28px;
  font-weight: 400;
  line-height: 36px;
  white-space: nowrap;
  overflow: hidden;
`

const Subtitle = styled.p`
  margin: 0;
  font-size: 25px;
  line-height: 34px;
  white-space: nowrap;
`

const VoiceButton = styled.button`
  display: flex;
  margin-left: 24px;
`

const MenuButton = styled.button`
  display: flex;
  margin-left: 60px;
`

const Chat = styled.main`
  position: relative;
  flex: 1;
  display: flex;
  flex-direction: column;
  align-items: center;
  padding: 18px 60px 96px;
  background: #f5f2eb;
  border-bottom: 2px solid #e9e8e6;
  overflow: hidden;
  isolation: isolate;
`

const WallpaperArt = styled.svg`
  position: absolute;
  inset: 0;
  z-index: -1;
  width: 100%;
  height: 100%;
  fill: none;
  stroke: #e9dfd1;
  stroke-width: 2px;
  stroke-linecap: round;
  stroke-linejoin: round;
  * {
    vector-effect: non-scaling-stroke;
  }
  text {
    font-weight: 700;
    text-anchor: middle;
  }
`

const Bubble = styled.div`
  border-radius: 14px;
  background: rgba(255, 255, 255, 0.85);
  box-shadow: 0 1px 1px rgba(11, 16, 20, 0.12);
  color: #5b6368;
`

const DatePill = styled(Bubble)`
  margin-bottom: 19px;
  padding: 13px 19px 11px;
  font-size: 20px;
  font-weight: 500;
  line-height: 24px;
`

const EventPill = styled(Bubble)`
  margin-bottom: 19px;
  padding: 13px 19px 11px;
  font-size: 22px;
  line-height: 26px;
`

const Notice = styled(Bubble)`
  align-self: stretch;
  margin: 0 4px;
  padding: 14px ${props => (props.tone === 'cream' ? 28 : 12)}px 10px;
  background: ${props => (props.tone === 'cream' ? '#ffeed4' : 'rgba(255, 255, 255, 0.8)')};
  font-size: 22px;
  line-height: 26px;
  text-align: center;
  svg {
    margin-right: 8px;
    vertical-align: -2px;
  }
`

const Keep = styled.span`
  white-space: nowrap;
`

const StrongLink = styled.a`
  font-weight: 700;
`

const UnreadPill = styled.div`
  margin: 25px 0 26px;
  padding: 21px 40px 19px;
  border-radius: 33px;
  background: #fff;
  font-size: 21px;
  font-weight: 500;
  line-height: 26px;
`

const GroupCard = styled.section`
  align-self: stretch;
  display: flex;
  flex-direction: column;
  align-items: center;
  margin-bottom: 24px;
  padding: 40px 48px 48px;
  border-radius: 46px;
  background: rgba(255, 255, 255, 0.9);
  text-align: center;
`

const CardTitle = styled.h2`
  margin: 26px 0 12px;
  font-size: 27px;
  font-weight: 500;
  line-height: 36px;
`

const Meta = styled.p`
  max-width: 440px;
  margin: 0 0 23px;
  color: #5b6368;
  font-size: 25px;
  line-height: 34px;
`

const Description = styled.p`
  margin: 0;
  font-size: 25px;
  line-height: 34px;
`

const MoreButton = styled.button`
  margin-bottom: 6px;
  color: #1b8755;
  font-size: 25px;
  font-weight: 700;
  line-height: 34px;
`

const TagButton = styled.button`
  align-self: stretch;
  display: flex;
  align-items: center;
  justify-content: center;
  gap: 18px;
  margin: 0 4px;
  padding-right: 16px;
  height: 80px;
  border: 2px solid #cbcdcf;
  border-radius: 40px;
  color: #1b8755;
  font-size: 24px;
  font-weight: 500;
`

const Footer = styled.div`
  height: 11px;
  background: linear-gradient(#fff 50%, #f4f5f5);
`

const Toast = styled.div`
  padding: 32px 48px 24px;
  background: #14191c;
  color: #c4c6c7;
  font-size: 24px;
  line-height: 28px;
`

const SystemNav = styled.nav`
  display: grid;
  grid-template-columns: repeat(3, 1fr);
  align-items: center;
  justify-items: center;
  height: 96px;
  padding: 0 12.5%;
  background: #f7f8fa;
  button {
    display: flex;
  }
`

export default App
